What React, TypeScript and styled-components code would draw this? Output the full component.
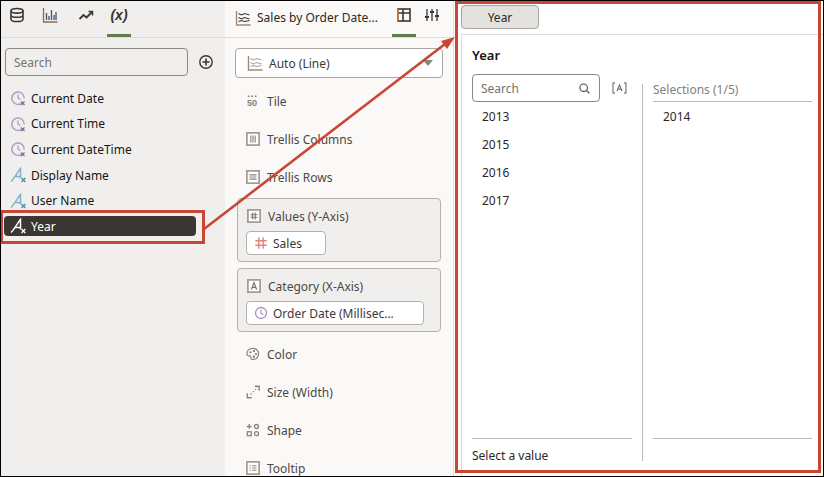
import React from 'react';
import styled, { createGlobalStyle } from 'styled-components';

const GlobalStyle = createGlobalStyle`
  html, body { margin: 0; padding: 0; overflow: hidden; background: #fff; }
  * { box-sizing: border-box; }
`;

const Frame = styled.div`
  position: relative;
  width: 824px;
  height: 477px;
  border: 1px solid #000;
  display: grid;
  grid-template-columns: 224px 229px 1fr;
  grid-template-rows: minmax(0, 1fr);
  overflow: hidden;
  font-family: 'Noto Sans', 'Open Sans', sans-serif;
  font-size: 12px;
  color: #161513;
`;

/* left panel */
const DataPanel = styled.div`
  background: #f1efed;
  display: flex;
  flex-direction: column;
  min-height: 0;
`;

const TabBar = styled.div<{ $pad: number }>`
  height: 37px;
  flex: none;
  border-bottom: 1px solid #dfdcd8;
  display: flex;
  align-items: stretch;
  padding-left: ${(p) => p.$pad}px;
`;

const Tab = styled.div<{ $active?: boolean; $width: number; $left?: number }>`
  width: ${(p) => p.$width}px;
  margin-left: ${(p) => p.$left ?? 0}px;
  display: flex;
  align-items: center;
  justify-content: center;
  padding-bottom: 6px;
  border-bottom: 3px solid ${(p) => (p.$active ? '#5f7d4f' : 'transparent')};
`;

const FxTab = styled.span`
  font-family: 'Liberation Sans', sans-serif;
  font-style: italic;
  font-weight: 700;
  font-size: 14px;
  color: #3a3632;
`;

const SearchRow = styled.div`
  display: flex;
  align-items: center;
  gap: 10px;
  padding: 10px 0 0 4px;
`;

const SearchBox = styled.div<{ $width: number }>`
  width: ${(p) => p.$width}px;
  height: 28px;
  border: 1px solid #8c8782;
  border-radius: 4px;
  display: flex;
  align-items: center;
  justify-content: space-between;
  padding: 0 8px;
  color: #77736e;
  background: transparent;
`;

const VarList = styled.div`
  display: flex;
  flex-direction: column;
  padding: 12px 0 0 3px;
`;

const VarRow = styled.div<{ $selected?: boolean }>`
  width: 192px;
  height: 20px;
  margin-bottom: 5.7px;
  display: flex;
  align-items: center;
  gap: 5px;
  padding-left: 6px;
  border-radius: 4px;
  background: ${(p) => (p.$selected ? '#3a3632' : 'transparent')};
  color: ${(p) => (p.$selected ? '#fff' : '#161513')};
`;

/* middle panel */
const GrammarPanel = styled.div`
  background: #fbf9f8;
  border-right: 1px solid #dfdcd8;
  display: flex;
  flex-direction: column;
  min-height: 0;
  overflow: hidden;
`;

const ChartName = styled.div`
  width: 157px;
  display: flex;
  align-items: center;
  gap: 6px;
  padding-bottom: 3px;
  color: #2b2825;
`;

const ChartType = styled.div`
  margin: 10px 0 0 10px;
  width: 208px;
  height: 30px;
  flex: none;
  border: 1px solid #a9a49f;
  border-radius: 4px;
  background: #fff;
  display: flex;
  align-items: center;
  gap: 6px;
  padding: 0 9px 0 11px;
  color: #3d3935;
`;

const Caret = styled.span`
  margin-left: auto;
  width: 0;
  height: 0;
  border-left: 5px solid transparent;
  border-right: 5px solid transparent;
  border-top: 6px solid #8a857f;
`;

const Slots = styled.div`
  display: flex;
  flex-direction: column;
  padding: 4px 0 0 11px;
`;

const Slot = styled.div`
  height: 38px;
  flex: none;
  display: flex;
  align-items: center;
  gap: 7px;
  padding-left: 10px;
  color: #4c4844;
`;

const FilledSlot = styled.div<{ $top?: number; $bottom: number }>`
  width: 204px;
  height: 64px;
  flex: none;
  margin-top: ${(p) => p.$top ?? 0}px;
  margin-bottom: ${(p) => p.$bottom}px;
  margin-left: 1px;
  border: 1px solid #b5b0aa;
  border-radius: 4px;
  background: #f1efed;
  padding: 0 0 0 8px;
  color: #4c4844;
`;

const SlotHead = styled.div`
  height: 32px;
  padding: 2px 0 0 1px;
  display: flex;
  align-items: center;
  gap: 7px;
`;

const Pill = styled.div<{ $width: number }>`
  width: ${(p) => p.$width}px;
  height: 24px;
  background: #fff;
  border: 1px solid #b5b0aa;
  border-radius: 4px;
  display: flex;
  align-items: center;
  gap: 5px;
  padding-left: 7px;
  color: #3d3935;
`;

/* right panel */
const FilterPanel = styled.div`
  background: #fff;
  display: flex;
  flex-direction: column;
  padding-left: 7px;
  min-height: 0;
`;

const FilterTabs = styled.div`
  height: 34px;
  flex: none;
  border-bottom: 1px solid #dfdcd8;
  padding-top: 4px;
`;

const FilterTab = styled.div`
  width: 78px;
  height: 24px;
  background: #e4e2de;
  border: 1px solid #aaa5a0;
  border-radius: 4px;
  display: flex;
  align-items: center;
  justify-content: center;
  color: #2b2825;
`;

const FilterBody = styled.div`
  flex: 1;
  border-left: 1px solid #dfdcd8;
  display: flex;
  flex-direction: column;
  padding: 0 0 12px 10px;
  min-height: 0;
`;

const FilterTitle = styled.div`
  height: 39px;
  flex: none;
  display: flex;
  align-items: center;
  font-size: 13px;
  font-weight: 600;
`;

const Columns = styled.div`
  flex: 1;
  display: grid;
  grid-template-columns: 170px 1fr;
  grid-template-rows: minmax(0, 1fr);
  min-height: 0;
`;

const Column = styled.div`
  display: flex;
  flex-direction: column;
  min-height: 0;
`;

const SearchLine = styled.div`
  display: flex;
  align-items: center;
  gap: 12px;
`;

const Values = styled.div`
  flex: 1;
  display: flex;
  flex-direction: column;
  padding: 0 0 0 10px;
  color: #2b2825;
`;

const ValueItem = styled.div`
  height: 28px;
  display: flex;
  align-items: center;
`;

const Foot = styled.div`
  width: 160px;
  height: 26px;
  flex: none;
  border-top: 1px solid #bdb8b2;
  display: flex;
  align-items: flex-end;
  color: #2b2825;
`;

const SelColumn = styled(Column)`
  border-left: 1px solid #bdb8b2;
  margin: 10px 0 3px;
  padding-left: 10px;
  width: 170px;
`;

const SelHead = styled.div`
  height: 18px;
  flex: none;
  width: 159px;
  border-bottom: 1px solid #bdb8b2;
  color: #85807b;
  display: flex;
  align-items: center;
  padding-bottom: 6px;
`;

const SelFoot = styled.div`
  width: 159px;
  height: 23px;
  border-top: 1px solid #bdb8b2;
  flex: none;
`;

/* callouts over the page */
const Callout = styled.svg`
  position: absolute;
  left: -1px;
  top: -1px;
  width: 824px;
  height: 477px;
  pointer-events: none;
`;

const TILE = '#8a857f';

const Icon = ({ children, size = 16 }: { children: React.ReactNode; size?: number }) => (
  <svg width={size} height={size} viewBox="0 0 16 16" fill="none" style={{ flex: 'none' }}>
    {children}
  </svg>
);

const ClockX = () => (
  <Icon>
    <path d="M11.5 13.3A6.2 6.2 0 1 1 14.2 8.5" stroke="#b09cc4" strokeWidth="1.5" />
    <path d="M8 4.5V8l2.4 1.6" stroke="#b09cc4" strokeWidth="1.3" />
    <path d="M11 11.5l3.5 3.5M14.5 11.5L11 15" stroke="#7d6a94" strokeWidth="1.3" />
  </Icon>
);

const TextX = ({ color = '#7fb3c9', x = '#4f8aa3' }: { color?: string; x?: string }) => (
  <Icon>
    <path d="M1 14.5C4.5 11 7.5 5 10.5 1.5V11.5M4.5 9.5h6" stroke={color} strokeWidth="1.5" />
    <path d="M11.5 11l3.8 4M15.3 11l-3.8 4" stroke={x} strokeWidth="1.3" />
  </Icon>
);

const LineChart = ({ color = '#3a3632' }: { color?: string }) => (
  <Icon>
    <path d="M1.5 1v14h14" stroke="#a08a70" strokeWidth="1.4" />
    <path d="M3.5 3.5l3 1.5 3-1.5 5 1.5M3.5 7.5l3 1.5 3-1.5 5 1.5M3.5 11.5l3-1 3 1 5-1" stroke={color} strokeWidth="1.1" />
  </Icon>
);

const BoxIcon = ({ children }: { children?: React.ReactNode }) => (
  <Icon size={14}>
    <rect x="1" y="1" width="14" height="14" fill="#fff" stroke="#a39d96" strokeWidth="2" />
    {children}
  </Icon>
);

const Magnifier = () => (
  <Icon size={13}>
    <circle cx="7" cy="7" r="4.6" stroke="#4c4844" strokeWidth="1.4" />
    <path d="M10.5 10.5l3.5 3.5" stroke="#4c4844" strokeWidth="1.5" />
  </Icon>
);

const vars = [
  { name: 'Current Date', icon: <ClockX /> },
  { name: 'Current Time', icon: <ClockX /> },
  { name: 'Current DateTime', icon: <ClockX /> },
  { name: 'Display Name', icon: <TextX /> },
  { name: 'User Name', icon: <TextX /> },
];

const App = () => {
  return (
    <Frame>
      <GlobalStyle />
      <DataPanel>
        <TabBar $pad={0}>
          <Tab $width={31}>
            <Icon>
              <ellipse cx="8" cy="3.8" rx="6" ry="2.3" stroke="#3a3632" strokeWidth="1.6" />
              <path d="M2 3.8v8.4c0 1.3 2.7 2.3 6 2.3s6-1 6-2.3V3.8M2 8c0 1.3 2.7 2.3 6 2.3s6-1 6-2.3" stroke="#3a3632" strokeWidth="1.6" />
            </Icon>
          </Tab>
          <Tab $width={36}>
            <Icon>
              <path d="M1.5 1v14h14" stroke="#8a6d4f" strokeWidth="1.3" />
              <path d="M4.5 13V6M7 13V9M9.5 13V3M12 13V8M14 13V5" stroke="#3f5470" strokeWidth="1.3" />
            </Icon>
          </Tab>
          <Tab $width={36}>
            <Icon>
              <path d="M1.5 12l4-4 3 2.5L14 5" stroke="#3a3632" strokeWidth="1.8" />
              <path d="M10.5 4.5H14.5V8.5" stroke="#3a3632" strokeWidth="1.5" />
            </Icon>
          </Tab>
          <Tab $active $width={24} $left={3}>
            <FxTab>(x)</FxTab>
          </Tab>
        </TabBar>
        <SearchRow>
          <SearchBox $width={183}>Search</SearchBox>
          <Icon>
            <circle cx="8" cy="8" r="6.2" stroke="#3a3632" strokeWidth="1.4" />
            <path d="M8 4.5v7M4.5 8h7" stroke="#3a3632" strokeWidth="1.6" />
          </Icon>
        </SearchRow>
        <VarList>
          {vars.map((v) => (
            <VarRow key={v.name}>
              {v.icon}
              {v.name}
            </VarRow>
          ))}
          <VarRow $selected>
            <TextX color="#fff" x="#fff" />
            Year
          </VarRow>
        </VarList>
      </DataPanel>

      <GrammarPanel>
        <TabBar $pad={10}>
          <ChartName>
            <LineChart />
            Sales by Order Date...
          </ChartName>
          <Tab $active $width={24}>
            <Icon>
              <rect x="2" y="2" width="12" height="12" stroke="#3a3632" strokeWidth="1.6" />
              <path d="M2 6h12M7 2v12" stroke="#3a3632" strokeWidth="1.6" />
              <path d="M2 2v12" stroke="#c98a3c" strokeWidth="1.6" />
            </Icon>
          </Tab>
          <Tab $width={32}>
            <Icon>
              <path d="M3 2v12M8 2v12M13 2v12" stroke="#3a3632" strokeWidth="1.3" />
              <path d="M1 10h4M6 5h4M11 9h4" stroke="#3a3632" strokeWidth="1.9" />
            </Icon>
          </Tab>
        </TabBar>
        <ChartType>
          <LineChart color="#a9a49f" />
          Auto (Line)
          <Caret />
        </ChartType>
        <Slots>
          <Slot>
            <Icon size={14}>
              <path d="M2 2.5h2M6 2.5h2M10 2.5h2" stroke={TILE} strokeWidth="1.6" />
              <text x="1" y="14" fontSize="10.5" fontWeight="700" fill={TILE} fontFamily="Liberation Sans">50</text>
            </Icon>
            Tile
          </Slot>
          <Slot>
            <BoxIcon>
              <path d="M5.5 4v8M8 4v8M10.5 4v8" stroke="#8a857f" strokeWidth="1.3" />
            </BoxIcon>
            Trellis Columns
          </Slot>
          <Slot>
            <BoxIcon>
              <path d="M4 5.5h8M4 8h8M4 10.5h8" stroke="#8a857f" strokeWidth="1.3" />
            </BoxIcon>
            Trellis Rows
          </Slot>
          <FilledSlot $top={2} $bottom={6}>
            <SlotHead>
              <BoxIcon>
                <path d="M6.5 4v8M9.5 4v8M4 6.5h8M4 9.5h8" stroke="#77736e" strokeWidth="1.2" />
              </BoxIcon>
              Values (Y-Axis)
            </SlotHead>
            <Pill $width={80}>
              <Icon size={14}>
                <path d="M5.5 1.5v13M10.5 1.5v13M1.5 5.5h13M1.5 10.5h13" stroke="#e2857a" strokeWidth="1.6" />
              </Icon>
              Sales
            </Pill>
          </FilledSlot>
          <FilledSlot $bottom={3}>
            <SlotHead>
              <BoxIcon>
                <path d="M5 12l3-8 3 8M6 9.5h4" stroke="#77736e" strokeWidth="1.3" />
              </BoxIcon>
              Category (X-Axis)
            </SlotHead>
            <Pill $width={178}>
              <Icon size={14}>
                <circle cx="8" cy="8" r="6.3" stroke="#a98fc4" strokeWidth="1.5" />
                <path d="M8 4v4.2l2.6 1.6" stroke="#a98fc4" strokeWidth="1.3" />
              </Icon>
              Order Date (Millisec...
            </Pill>
          </FilledSlot>
          <Slot>
            <Icon size={14}>
              <path d="M8 1.5C3.5 1.5 1 4.5 1 8c0 2.5 2.5 2 3.5 2.2C6 10.5 5 12 6 13.5c.7 1 6 1.5 8-3.5 1.5-4-1.5-8.5-6-8.5z" stroke="#8a857f" strokeWidth="1.4" />
              <circle cx="5" cy="6" r="1.2" fill="#77736e" />
              <circle cx="9" cy="4.7" r="1.2" fill="#77736e" />
              <circle cx="11.5" cy="8" r="1.2" fill="#77736e" />
              <circle cx="9" cy="11" r="1.2" fill="#77736e" />
            </Icon>
            Color
          </Slot>
          <Slot>
            <Icon size={14}>
              <path d="M1.5 9.5v5h5M10 1.5h5v5" stroke="#8a857f" strokeWidth="1.6" />
              <path d="M5 11l1.5-1.5M8 8l1-1M10.5 5.5L11.5 4.5" stroke="#8a857f" strokeWidth="1.3" />
            </Icon>
            Size (Width)
          </Slot>
          <Slot>
            <Icon size={14}>
              <path d="M1 4h5.5M3.7 1.2v5.5" stroke="#8a857f" strokeWidth="1.6" />
              <circle cx="12" cy="4" r="2.3" stroke="#8a857f" strokeWidth="1.5" />
              <rect x="1.5" y="10" width="4.5" height="4.5" stroke="#8a857f" strokeWidth="1.5" />
              <circle cx="12" cy="12.2" r="2.3" stroke="#8a857f" strokeWidth="1.5" />
            </Icon>
            Shape
          </Slot>
          <Slot>
            <BoxIcon>
              <path d="M4 5.5h1.5M7 5.5h5M4 8h1.5M7 8h5M4 10.5h1.5M7 10.5h5" stroke="#8a857f" strokeWidth="1.2" />
            </BoxIcon>
            Tooltip
          </Slot>
        </Slots>
      </GrammarPanel>

      <FilterPanel>
        <FilterTabs>
          <FilterTab>Year</FilterTab>
        </FilterTabs>
        <FilterBody>
          <FilterTitle>Year</FilterTitle>
          <Columns>
            <Column>
              <SearchLine>
                <SearchBox $width={128}>
                  Search
                  <Magnifier />
                </SearchBox>
                <svg width="15" height="12" viewBox="0 0 15 12" fill="none">
                  <path d="M3 1H1v10h2M12 1h2v10h-2" stroke="#8a857f" strokeWidth="1.3" />
                  <path d="M5 9l2.5-6L10 9M6 7.2h3" stroke="#77736e" strokeWidth="1.2" />
                </svg>
              </SearchLine>
              <Values>
                {['2013', '2015', '2016', '2017'].map((y) => (
                  <ValueItem key={y}>{y}</ValueItem>
                ))}
              </Values>
              <Foot>Select a value</Foot>
            </Column>
            <SelColumn>
              <SelHead>Selections (1/5)</SelHead>
              <Values>
                <ValueItem>2014</ValueItem>
              </Values>
              <SelFoot />
            </SelColumn>
          </Columns>
        </FilterBody>
      </FilterPanel>

      <Callout viewBox="0 0 824 477">
        <rect x="1.5" y="211.5" width="202" height="31" fill="none" stroke="#c74634" strokeWidth="3" />
        <rect x="456.5" y="2.5" width="363" height="469" fill="none" stroke="#c74634" strokeWidth="3" />
        <path d="M204 229L445 44" stroke="#c74634" strokeWidth="2.6" fill="none" />
        <path d="M455 37L441 41L447 49Z" fill="#c74634" />
      </Callout>
    </Frame>
  );
};

export default App;
